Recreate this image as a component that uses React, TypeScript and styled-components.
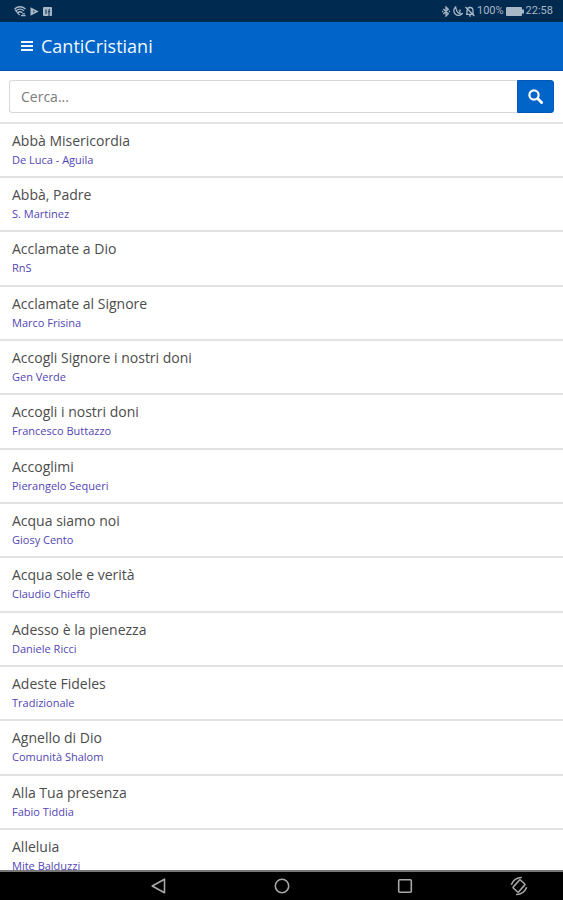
import React, { useState } from "react";
import styled, { createGlobalStyle } from "styled-components";

const GlobalStyle = createGlobalStyle`
  * { box-sizing: border-box; }
  body { margin: 0; background: #fff; font-family: "Open Sans", "Noto Sans", sans-serif; }
`;

const Screen = styled.div`
  display: flex;
  flex-direction: column;
  height: 100vh;
  overflow: hidden;
`;

const StatusBar = styled.div`
  flex: none;
  display: flex;
  align-items: center;
  justify-content: space-between;
  height: 22px;
  padding: 0 10px 0 14px;
  background: #002a50;
  color: #a9b8c6;
  font: 11px/22px Roboto, sans-serif;
`;

const StatusGroup = styled.div<{ $gap: number }>`
  display: flex;
  align-items: center;
  gap: ${(p) => p.$gap}px;
  svg { display: block; }
`;

const Header = styled.header`
  flex: none;
  display: flex;
  align-items: center;
  gap: 8px;
  height: 49px;
  padding: 0 21px;
  background: #0064c8;
  border-bottom: 1px solid #0052b4;
  color: #f0f8ff;
`;

const MenuButton = styled.button`
  display: flex;
  padding: 0;
  border: 0;
  background: none;
  color: inherit;
`;

const AppTitle = styled.h1`
  margin: 0;
  font-size: 18px;
  line-height: 24px;
  font-weight: 400;
`;

const SearchForm = styled.form`
  flex: none;
  display: flex;
  height: 53px;
  padding: 9px;
  border-bottom: 2px solid #e4e4e4;
`;

const SearchInput = styled.input`
  flex: 1;
  min-width: 0;
  padding: 0 11px;
  border: 1px solid #d8d8d8;
  border-right: 0;
  border-radius: 3px 0 0 3px;
  outline: 0;
  font: 14px/20px "Open Sans", sans-serif;
  color: #444;
  &::placeholder { color: #7c7c7c; opacity: 1; }
`;

const SearchButton = styled.button`
  display: flex;
  align-items: center;
  justify-content: center;
  width: 37px;
  padding: 0;
  border: 1px solid #0058ba;
  border-radius: 0 3px 3px 0;
  background: #0064c8;
  color: #fff;
`;

const SongList = styled.ul`
  flex: 1;
  min-height: 0;
  margin: 0;
  padding: 0;
  list-style: none;
  overflow-y: auto;
  scrollbar-width: none;
`;

const SongRow = styled.li`
  height: 54px;
  border-bottom: 2px solid #e2e2e2;
  &:nth-child(3n) { height: 55px; }
`;

const SongLink = styled.a`
  display: block;
  padding: 7px 12px;
  text-decoration: none;
`;

const SongTitle = styled.span`
  display: block;
  font-size: 14px;
  line-height: 20px;
  color: #4c4c4c;
`;

const SongAuthor = styled.span`
  display: block;
  font-size: 11px;
  line-height: 18px;
  color: #5246b4;
`;

const NavBar = styled.nav`
  flex: none;
  display: flex;
  align-items: center;
  gap: 95px;
  height: 30px;
  padding: 0 34px 0 149px;
  border-top: 2px solid #777;
  background: #000;
`;

const MainKeys = styled.div`
  flex: 1;
  display: flex;
  align-items: center;
  justify-content: space-between;
`;

const NavButton = styled.button`
  display: flex;
  padding: 0;
  border: 0;
  background: none;
  color: #a8a8a8;
`;

const songs = [
  ["Abbà Misericordia", "De Luca - Aguila"],
  ["Abbà, Padre", "S. Martinez"],
  ["Acclamate a Dio", "RnS"],
  ["Acclamate al Signore", "Marco Frisina"],
  ["Accogli Signore i nostri doni", "Gen Verde"],
  ["Accogli i nostri doni", "Francesco Buttazzo"],
  ["Accoglimi", "Pierangelo Sequeri"],
  ["Acqua siamo noi", "Giosy Cento"],
  ["Acqua sole e verità", "Claudio Chieffo"],
  ["Adesso è la pienezza", "Daniele Ricci"],
  ["Adeste Fideles", "Tradizionale"],
  ["Agnello di Dio", "Comunità Shalom"],
  ["Alla Tua presenza", "Fabio Tiddia"],
  ["Alleluia", "Mite Balduzzi"],
];

const WifiIcon = () => (
  <svg width="12" height="11" viewBox="0 0 12 11" fill="none" stroke="currentColor">
    <path d="M.5 3Q6-1.4 11.5 3" strokeWidth="1.5" />
    <path d="M2 4.7Q6 1.6 10 4.7M1 3.6l4.6 5.6M4 6.4Q6 5 8.4 6.6" strokeWidth="1.3" />
    <path d="M7 9.6h4.6M8.2 7.8h2.8" strokeWidth="1.3" />
  </svg>
);
const PlayIcon = () => (
  <svg width="9" height="9" viewBox="0 0 9 9" fill="currentColor">
    <path d="M.5.2L8.7 4.5.5 8.8z" />
    <path d="M3 3.2l2.4 1.3L3 5.8z" fill="#43617b" />
  </svg>
);
const AppIcon = () => (
  <svg width="9" height="9" viewBox="0 0 9 9">
    <rect width="9" height="9" rx="1" fill="currentColor" />
    <path d="M3 7V2.4M6 9V3.4q0-1 1-1M4.8 4.8h2.4" stroke="#123858" strokeWidth="1.1" fill="none" />
  </svg>
);
const BluetoothIcon = () => (
  <svg width="8" height="11" viewBox="0 0 8 11" fill="none" stroke="currentColor" strokeWidth="1.3">
    <path d="M1.3 3l5 4.8L4 10V1l2.3 2.2-5 4.8M0 5.5h1.2M6.8 5.5H8" />
  </svg>
);
const MoonIcon = () => (
  <svg width="11" height="11" viewBox="0 0 11 11" fill="none" stroke="currentColor" strokeWidth="1.3">
    <path d="M3.6 1A4.7 4.7 0 1 0 10.2 7.6Q5 9 3.6 1z" />
    <path d="M6.6 4.2h2.2L6.8 6.2H9" strokeWidth=".9" />
  </svg>
);
const MutedBellIcon = () => (
  <svg width="10" height="11" viewBox="0 0 10 11" fill="none" stroke="currentColor" strokeWidth="1.3">
    <path d="M1 8.3h8M2 8V4.5a3 3 0 0 1 6 0V8M5 1.4V.4M4 9.8h2M.4 1l9 9" />
  </svg>
);
const BatteryIcon = () => (
  <svg width="18" height="9" viewBox="0 0 18 9" fill="currentColor">
    <rect width="16" height="9" rx="1" />
    <rect x="16" y="2.5" width="2" height="4" />
  </svg>
);
const MenuIcon = () => (
  <svg width="12" height="12" viewBox="0 0 12 12" stroke="currentColor" strokeWidth="2">
    <path d="M0 2h12M0 6h12M0 10h12" />
  </svg>
);
const SearchIcon = () => (
  <svg width="15" height="15" viewBox="0 0 15 15" fill="none" stroke="currentColor">
    <circle cx="6" cy="6" r="4.6" strokeWidth="2.2" />
    <path d="M9.6 9.6l4 4" strokeWidth="2.8" strokeLinecap="round" />
  </svg>
);
const BackIcon = () => (
  <svg width="18" height="18" viewBox="0 0 18 18" fill="none" stroke="currentColor" strokeWidth="1.6" strokeLinejoin="round">
    <path d="M15.5 2.2v13.6L3.2 9z" />
  </svg>
);
const HomeIcon = () => (
  <svg width="18" height="18" viewBox="0 0 18 18" fill="none" stroke="currentColor" strokeWidth="1.6">
    <circle cx="9" cy="9" r="6.7" />
  </svg>
);
const RecentIcon = () => (
  <svg width="18" height="18" viewBox="0 0 18 18" fill="none" stroke="currentColor" strokeWidth="1.6">
    <rect x="2.7" y="2.7" width="12.6" height="12.6" rx="1" />
  </svg>
);
const RotateIcon = () => (
  <svg width="20" height="20" viewBox="0 0 20 20" fill="none" stroke="currentColor" strokeWidth="1.6">
    <g transform="rotate(42 10 10)">
      <rect x="6.4" y="4.6" width="7.2" height="10.8" rx="1" />
      <path d="M6.4 1.8Q.8 6.6 3.4 14.2M13.6 18.2Q19.2 13.4 16.6 5.8" />
    </g>
  </svg>
);

export default function App() {
  const [query, setQuery] = useState("");
  const shown = songs.filter((s) => s.join(" ").toLowerCase().includes(query.toLowerCase()));
  return (
    <Screen>
      <GlobalStyle />
      <StatusBar>
        <StatusGroup $gap={4}>
          <WifiIcon />
          <PlayIcon />
          <AppIcon />
        </StatusGroup>
        <StatusGroup $gap={2}>
          <BluetoothIcon />
          <MoonIcon />
          <MutedBellIcon />
          <span>100%</span>
          <BatteryIcon />
          <span>22:58</span>
        </StatusGroup>
      </StatusBar>
      <Header>
        <MenuButton type="button" aria-label="Menu"><MenuIcon /></MenuButton>
        <AppTitle>CantiCristiani</AppTitle>
      </Header>
      <SearchForm onSubmit={(e) => e.preventDefault()}>
        <SearchInput
          type="text"
          aria-label="Cerca"
          placeholder="Cerca..."
          value={query}
          onChange={(e) => setQuery(e.target.value)}
        />
        <SearchButton type="submit" aria-label="Cerca"><SearchIcon /></SearchButton>
      </SearchForm>
      <SongList>
        {shown.map(([title, author]) => (
          <SongRow key={title}>
            <SongLink href="#">
              <SongTitle>{title}</SongTitle>
              <SongAuthor>{author}</SongAuthor>
            </SongLink>
          </SongRow>
        ))}
      </SongList>
      <NavBar>
        <MainKeys>
          <NavButton type="button" aria-label="Indietro"><BackIcon /></NavButton>
          <NavButton type="button" aria-label="Home"><HomeIcon /></NavButton>
          <NavButton type="button" aria-label="Recenti"><RecentIcon /></NavButton>
        </MainKeys>
        <NavButton type="button" aria-label="Ruota"><RotateIcon /></NavButton>
      </NavBar>
    </Screen>
  );
}
